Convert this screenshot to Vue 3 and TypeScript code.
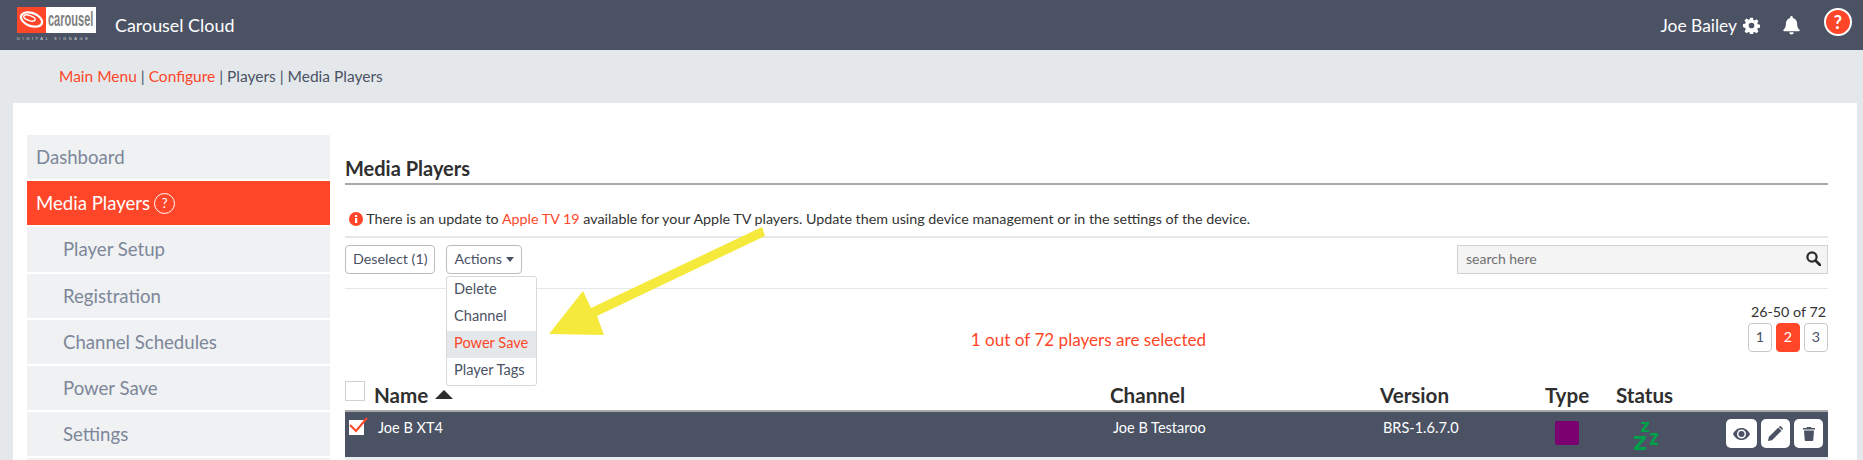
<script setup lang="ts">
const sideItems: { label: string; sub: boolean; active?: boolean }[] = [
  { label: 'Dashboard', sub: false },
  { label: 'Media Players', sub: false, active: true },
  { label: 'Player Setup', sub: true },
  { label: 'Registration', sub: true },
  { label: 'Channel Schedules', sub: true },
  { label: 'Power Save', sub: true },
  { label: 'Settings', sub: true },
  { label: '', sub: true },
]
const menuItems: string[] = ['Delete', 'Channel', 'Power Save', 'Player Tags']
const pages: number[] = [1, 2, 3]
</script>

<template>
  <div class="app">
    <header class="topbar">
      <div class="logo">
        <div class="logo-top">
          <div class="logo-mark">
            <svg width="29" height="25" viewBox="0 0 29 25" fill="none" stroke="#fff">
              <ellipse cx="14.500" cy="12.500" rx="11" ry="6.500" transform="rotate(20 14.500 12.500)" stroke-width="2.200" />
              <ellipse cx="12.500" cy="11" rx="6" ry="2.500" transform="rotate(20 12.500 11)" stroke-width="1.500" />
            </svg>
          </div>
          <div class="logo-word"><span>carousel</span></div>
        </div>
        <div class="logo-sub">DIGITAL SIGNAGE</div>
      </div>
      <div class="brand">Carousel Cloud</div>
      <div class="user">
        <span class="user-name">Joe Bailey</span>
        <svg class="gear" width="17" height="17" viewBox="0 0 24 24" fill="#fff">
          <path fill-rule="evenodd" d="M10 1h4l.6 3.100 1.900.8 2.600-1.800 2.800 2.800-1.800 2.600.8 1.900 3.100.6v4l-3.100.6-.8 1.900 1.800 2.600-2.800 2.800-2.600-1.800-1.900.8-.6 3.100h-4l-.6-3.100-1.900-.8-2.600 1.800-2.800-2.800 1.800-2.600-.8-1.900L0 14v-4l3.100-.6.8-1.900L2.100 4.900l2.800-2.800 2.600 1.800 1.900-.8L10 1zm2 7a4 4 0 1 0 0 8 4 4 0 0 0 0-8z" />
        </svg>
        <svg class="bell" width="17" height="19" viewBox="0 0 17 19" fill="#fff">
          <path d="M8.500 0a1.300 1.300 0 0 1 1.300 1.300v.6c2.700.6 4.300 2.900 4.300 5.600 0 3.800 1.100 4.900 2.400 6.300.5.600.1 1.400-.7 1.400H1.200c-.8 0-1.200-.8-.7-1.400 1.300-1.400 2.400-2.500 2.400-6.300 0-2.700 1.600-5 4.300-5.600v-.6A1.300 1.300 0 0 1 8.500 0z" />
          <path d="M6.300 16.300h4.400a2.200 2.200 0 0 1-4.400 0z" />
        </svg>
        <div class="help">?</div>
      </div>
    </header>

    <nav class="crumbs">
      <a class="link">Main Menu</a><span> | </span><a class="link">Configure</a><span> | Players | Media Players</span>
    </nav>

    <div class="panel">
      <aside class="side">
        <div
          v-for="item in sideItems"
          :key="item.label"
          class="side-item"
          :class="{ sub: item.sub, active: item.active }"
        >
          {{ item.label }}
          <span v-if="item.active" class="side-help">?</span>
        </div>
      </aside>

      <main class="main">
        <h1 class="title">Media Players</h1>
        <p class="notice">
          <svg width="14" height="14" viewBox="0 0 14 14">
            <circle cx="7" cy="7" r="7" fill="#ff4628" />
            <rect x="6" y="6" width="2.200" height="5" fill="#fff" />
            <rect x="6" y="3" width="2.200" height="2" fill="#fff" />
          </svg>
          There is an update to <a class="link">Apple TV 19</a> available for your Apple TV players. Update them using device management or in the settings of the device.
        </p>

        <div class="toolbar">
          <button class="btn deselect">Deselect (1)</button>
          <div class="actions">
            <button class="btn">Actions <span class="caret"></span></button>
            <ul class="menu">
              <li v-for="m in menuItems" :key="m" :class="{ hover: m === 'Power Save' }">{{ m }}</li>
            </ul>
          </div>
          <div class="search">
            <span>search here</span>
            <svg width="15" height="15" viewBox="0 0 15 15" fill="none" stroke="#2b2b2b" stroke-width="2.200">
              <circle cx="6" cy="6" r="4.600" />
              <path d="M9.500 9.500 14 14" stroke-linecap="round" stroke-width="2.800" />
            </svg>
          </div>
        </div>

        <div class="status">
          <div class="selected">1 out of 72 players are selected</div>
          <div class="pager">
            <div class="range">26-50 of 72</div>
            <div class="pages">
              <span v-for="p in pages" :key="p" class="page" :class="{ on: p === 2 }">{{ p }}</span>
            </div>
          </div>
        </div>

        <div class="thead">
          <span class="box"></span>
          <span class="name-head">Name <i class="sort"></i></span>
          <span>Channel</span>
          <span>Version</span>
          <span>Type</span>
          <span>Status</span>
        </div>

        <div class="row">
          <span class="tick">
            <svg width="20" height="18" viewBox="0 0 20 18" fill="none" stroke="#ff4628" stroke-width="2">
              <path d="M1 8l6 6L18 1" />
            </svg>
          </span>
          <span class="cell first">Joe B XT4</span>
          <span class="cell first">Joe B Testaroo</span>
          <span class="cell ver">BRS-1.6.7.0</span>
          <span class="type"><i></i></span>
          <span class="zzz">
            <svg width="24" height="28" viewBox="0 0 24 28" fill="#00a04a">
              <path d="M7 0h8v2l-4.500 6H15v2H7V8l4.500-6H7zM16 11h8v2.200l-4.700 7.300H24V23h-8v-2.200l4.700-7.300H16zM0 14h12v2.500L4.500 25H12v3H0v-2.500L7.500 17H0z" />
            </svg>
          </span>
          <span class="ops">
            <button class="op eye">
              <svg width="17" height="12" viewBox="0 0 17 12">
                <path fill="#4a5264" fill-rule="evenodd" d="M8.500 0C12.500 0 15.500 2.700 17 6c-1.500 3.300-4.500 6-8.500 6S1.500 9.300 0 6c1.500-3.300 4.500-6 8.500-6zm0 1.500A4.500 4.500 0 1 0 8.500 10.500 4.500 4.500 0 0 0 8.500 1.500z" />
                <circle cx="8.500" cy="6" r="3" fill="#4a5264" />
              </svg>
            </button>
            <button class="op">
              <svg width="15" height="15" viewBox="0 0 15 15" fill="#4a5264">
                <path d="M0 15l.8-4L10.300 1.500l3.200 3.200L4 14.200zM11.200.6a1.300 1.300 0 0 1 1.900 0l1.300 1.300a1.300 1.300 0 0 1 0 1.900l-.3.300-3.200-3.200z" />
              </svg>
            </button>
            <button class="op">
              <svg width="12" height="14" viewBox="0 0 12 14" fill="#4a5264">
                <path d="M4 0h4l.6 1H12v1.500H0V1h3.400zM1 3.500h10l-.7 9.500a1 1 0 0 1-1 1H2.700a1 1 0 0 1-1-1z" />
              </svg>
            </button>
          </span>
        </div>
        <div class="row-next"></div>
      </main>
    </div>

    <svg class="arrow" width="1863" height="460" viewBox="0 0 1863 460">
      <polygon points="762,227 765,236 597,316 604,335 549,334 583,291 591,308" fill="#f5e93c" />
    </svg>
  </div>
</template>

<style>
html, body { margin: 0; padding: 0; overflow: hidden; }
</style>

<style scoped>
.app {
  position: relative;
  height: 460px;
  overflow: hidden;
  background: #e4e8eb;
  font-family: Lato, "Noto Sans", sans-serif;
  color: #4a5264;
}
.link { color: #ff4628; }

.topbar {
  height: 50px;
  background: #4a5264;
  display: flex;
  align-items: center;
  color: #fff;
  padding-left: 17px;
  padding-right: 11px;
}
.logo { width: 79px; margin-top: -2px; }
.logo-top { display: flex; height: 26px; }
.logo-mark {
  width: 29px;
  background: #ff4628;
  display: flex;
  align-items: center;
  justify-content: center;
}
.logo-word {
  flex: 1;
  min-width: 0;
  background: #fff;
  display: flex;
  align-items: center;
  justify-content: center;
}
.logo-word span {
  display: block;
  color: #808080;
  font-family: "Liberation Sans", sans-serif;
  font-size: 12px;
  font-weight: 700;
  line-height: 26px;
  transform: scale(.92, 1.7);
  margin-top: -1px;
}
.logo-sub {
  font-family: "Liberation Sans", sans-serif;
  font-size: 4px;
  line-height: 6px;
  margin-top: 3px;
  letter-spacing: 2.600px;
  color: #d6d9de;
  white-space: nowrap;
}
.brand { font-size: 17.900px; margin-left: 19px; }
.user {
  margin-left: auto;
  display: flex;
  align-items: center;
}
.user-name { font-size: 17.400px; }
.gear { margin-left: 6px; }
.bell { margin-left: 23px; }
.help {
  margin-left: 24px;
  margin-top: -7px;
  width: 24px;
  height: 24px;
  border: 2px solid #fff;
  border-radius: 50%;
  background: #ff4628;
  text-align: center;
  font-size: 18px;
  font-weight: 700;
  line-height: 24px;
}

.crumbs {
  height: 53px;
  box-sizing: border-box;
  padding: 16px 0 0 59px;
  font-size: 15.500px;
  line-height: 20px;
  white-space: pre;
}

.panel {
  margin: 0 6px 0 13px;
  background: #fff;
  padding: 32px 29px 0 14px;
  display: flex;
  gap: 15px;
  height: 400px;
  box-sizing: border-box;
}
.side { width: 303px; flex: none; }
.side-item {
  height: 44px;
  margin-bottom: 2px;
  background: #eff1f3;
  color: #7d8799;
  font-size: 18.600px;
  line-height: 44px;
  padding-left: 9px;
  display: flex;
  align-items: center;
  gap: 4px;
}
.side-item:nth-child(3) { height: 45px; padding-bottom: 1px; box-sizing: border-box; }
.side-item.sub { padding-left: 36px; }
.side-item.active { background: #ff4628; color: #fff; }
.side-help {
  width: 19px;
  height: 19px;
  border: 1px solid #fff;
  border-radius: 50%;
  font-size: 13px;
  line-height: 19px;
  text-align: center;
}

.main { flex: 1; min-width: 0; padding-top: 22px; }
.title {
  margin: 0;
  height: 26px;
  line-height: 22px;
  font-size: 20px;
  font-weight: 700;
  color: #2f2f2f;
  border-bottom: 2px solid #a9a9a9;
}
.notice {
  margin: 0;
  padding: 24px 0 7px 4px;
  height: 20px;
  line-height: 20px;
  font-size: 14.300px;
  color: #333;
  border-bottom: 2px solid #e4e8eb;
  display: block;
  white-space: pre-wrap;
}
.notice svg { vertical-align: -2px; }

.toolbar {
  position: relative;
  display: flex;
  gap: 11px;
  padding: 7px 0 14px;
  border-bottom: 1px solid #e4e8eb;
}
.btn {
  height: 29px;
  box-sizing: border-box;
  background: #fff;
  border: 1px solid #bdbdbd;
  border-radius: 4px;
  font: inherit;
  font-size: 14.300px;
  line-height: 24px;
  color: #4a5264;
  padding: 0 7px 2px;
  white-space: nowrap;
}
.deselect { width: 90px; }
.actions { position: relative; }
.actions .btn { width: 76px; }
.caret {
  display: inline-block;
  width: 0;
  height: 0;
  border-left: 4.500px solid transparent;
  border-right: 4.500px solid transparent;
  border-top: 5px solid #4a5264;
  vertical-align: 2px;
}
.menu {
  position: absolute;
  z-index: 2;
  top: 31px;
  left: 0;
  width: 91px;
  box-sizing: border-box;
  margin: 0;
  padding: 0;
  list-style: none;
  background: #fff;
  border: 1px solid #d8d8d8;
  border-radius: 3px;
  font-size: 14.600px;
}
.menu li { height: 27px; line-height: 24px; padding-left: 7px; }
.menu li.hover { background: #e4e8eb; color: #ff4628; }
.search {
  margin-left: auto;
  width: 371px;
  height: 29px;
  box-sizing: border-box;
  background: #f4f4f4;
  border: 1px solid #d2d2d2;
  padding: 0 6px 2px 8px;
  display: flex;
  align-items: center;
  justify-content: space-between;
  font-size: 14px;
  color: #707070;
}

.status {
  height: 92px;
  box-sizing: border-box;
  display: grid;
  grid-template-columns: 1fr auto 1fr;
  padding-top: 13px;
}
.selected {
  grid-column: 2;
  color: #ff4628;
  font-size: 17.100px;
  line-height: 20px;
  margin: 28px 0 0 4px;
}
.pager { grid-column: 3; justify-self: end; text-align: right; }
.range { font-size: 14.300px; line-height: 20px; color: #333; margin-right: 2px; }
.pages { display: flex; gap: 4px; margin-top: 1px; }
.page {
  width: 24px;
  height: 29px;
  box-sizing: border-box;
  border: 1px solid #c8c8c8;
  border-radius: 4px;
  text-align: center;
  font-size: 14.300px;
  line-height: 26px;
}
.page.on { background: #ff4628; border-color: #ff4628; color: #fff; }

.thead, .row {
  display: grid;
  grid-template-columns: 30px 735px 270px 165px 71px 1fr;
}
.row { grid-template-columns: 30px 735px 270px 165px 71px 90px 1fr; }
.thead {
  height: 29px;
  align-items: center;
  font-size: 20.600px;
  line-height: 25px;
  font-weight: 700;
  color: #2f2f2f;
}
.name-head { margin-left: -1px; }
.box {
  width: 20px;
  height: 20px;
  box-sizing: border-box;
  border: 1px solid #d0d0d0;
  margin-top: -9px;
}
.sort {
  display: inline-block;
  width: 0;
  height: 0;
  border-left: 9.500px solid transparent;
  border-right: 9.500px solid transparent;
  border-top: 0;
  border-bottom: 9px solid #2f2f2f;
  vertical-align: 4px;
  margin-left: 2px;
}
.row {
  height: 47px;
  box-sizing: border-box;
  background: #4a5264;
  border-top: 2px solid #a9a9a9;
  color: #fff;
  font-size: 14.500px;
  position: relative;
}
.row-next { height: 3px; background: #e9eef0; }
.tick {
  position: relative;
  margin: 8px 0 0 4px;
  width: 15px;
  height: 15px;
  background: #fff;
}
.tick svg { position: absolute; left: 0; top: -3px; }
.cell { line-height: 20px; padding-top: 6px; }
.cell.first { padding-left: 3px; }
.cell.ver { padding-left: 3px; }
.type i {
  display: block;
  width: 24px;
  height: 24px;
  margin: 9px 0 0 10px;
  background: #7b0070;
  border-radius: 2px;
}
.zzz svg { display: block; margin: 10px 0 0 18px; }
.ops {
  display: flex;
  justify-content: flex-end;
  gap: 4px;
  padding: 7px 5px 0 0;
}
.op {
  width: 29px;
  height: 29px;
  box-sizing: border-box;
  padding: 0;
  border: none;
  border-radius: 5px;
  background: #fff;
  display: flex;
  align-items: center;
  justify-content: center;
}
.op.eye { width: 31px; }

.arrow {
  position: absolute;
  left: 0;
  top: 0;
  pointer-events: none;
  z-index: 3;
}
</style>
